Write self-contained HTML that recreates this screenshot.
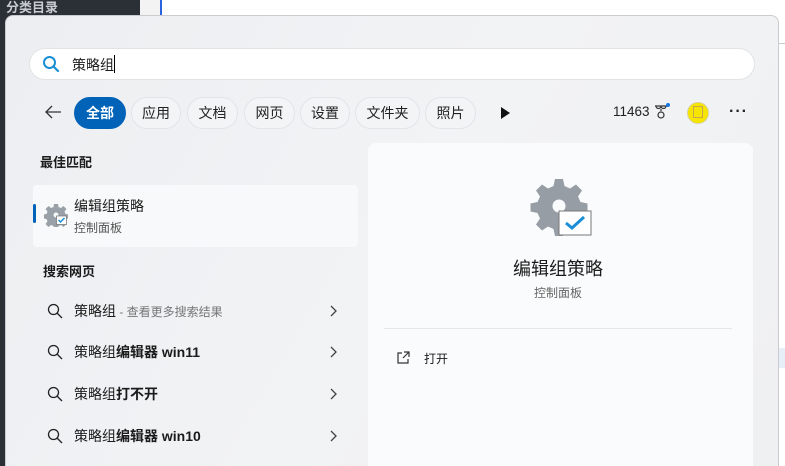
<!DOCTYPE html>
<html style="width:785px;height:466px;overflow:hidden"><head><meta charset="utf-8"><style>
*{margin:0;padding:0;box-sizing:border-box}
body{width:785px;height:466px;overflow:hidden;background:#fff;position:relative;font-family:"Liberation Sans","Noto Sans CJK SC",sans-serif;color:#1b1b1b}
.abs{position:absolute}
.pill{position:absolute;top:97px;height:32px;border-radius:16px;border:1px solid #e2e4e7;background:#f3f4f6;font-size:14px;line-height:30px;text-align:center;color:#222}
.row{position:absolute;left:33px;width:325px;height:40px}
.row .t{position:absolute;left:41px;top:10px;font-size:14px}
.row svg.m{position:absolute;left:14px;top:12px}
.row .ch{position:absolute;left:297px;top:13px}
</style></head><body>
<div class="abs" style="left:0;top:0;width:140px;height:48px;background:#2b2f36"></div>
<div class="abs" style="left:6px;top:-3px;color:#c8ccd2;font-size:13px;font-weight:bold">分类目录</div>
<div class="abs" style="left:0;top:0;width:5px;height:466px;background:#2b2f36"></div>
<div class="abs" style="left:160px;top:0;width:2px;height:15px;background:#2a62e0"></div>
<div class="abs" style="left:140px;top:0;width:20px;height:15px;background:#f3f3f3"></div>
<div class="abs" style="left:778px;top:43px;width:7px;height:1px;background:#ccc"></div>
<div class="abs" style="left:778px;top:348px;width:7px;height:20px;background:#e8eef8"></div>

<div class="abs" style="left:5px;top:15px;width:774px;height:460px;border:1px solid #c9cbce;border-radius:8px;background:linear-gradient(120deg,#eceef1,#f2f3f5 50%,#eff0f2)"></div>

<div class="abs" style="left:29px;top:48px;width:726px;height:32px;border-radius:16px;background:#fff;border:1px solid #e2e3e5"></div>
<svg class="abs" style="left:42px;top:55px" width="18" height="18" viewBox="0 0 18 18"><circle cx="7.5" cy="7.5" r="5.5" fill="none" stroke="#1a8fd6" stroke-width="2"/><path d="M11.5 11.5L16 16" stroke="#1a8fd6" stroke-width="2.2" stroke-linecap="round"/></svg>
<div class="abs" style="left:72px;top:55px;font-size:14px">策略组</div>
<div class="abs" style="left:114px;top:55px;width:1px;height:18px;background:#000"></div>

<svg class="abs" style="left:44px;top:104px" width="18" height="16" viewBox="0 0 18 16"><path d="M17 8H2M8 2L2 8l6 6" fill="none" stroke="#333" stroke-width="1.3"/></svg>
<div class="pill" style="left:74px;width:52px;background:#0063b8;border-color:#0063b8;color:#fff;font-weight:bold">全部</div>
<div class="pill" style="left:131px;width:50px">应用</div>
<div class="pill" style="left:187px;width:51px">文档</div>
<div class="pill" style="left:244px;width:51px">网页</div>
<div class="pill" style="left:300px;width:50px">设置</div>
<div class="pill" style="left:355px;width:65px">文件夹</div>
<div class="pill" style="left:425px;width:51px">照片</div>
<svg class="abs" style="left:500px;top:107px" width="10" height="12"><path d="M1 0L10 6L1 12Z" fill="#111"/></svg>
<div class="abs" style="left:613px;top:104px;font-size:13.5px;color:#222">11463</div>
<svg class="abs" style="left:654px;top:101px" width="16" height="20" viewBox="0 0 16 20"><path d="M1 5h12M2 5a2.5 2.5 0 0 0 5 0M7 5a2.5 2.5 0 0 0 5 0M7 8v2" fill="none" stroke="#333" stroke-width="1.2"/><circle cx="7" cy="14" r="3" fill="none" stroke="#333" stroke-width="1.2"/><circle cx="14" cy="4" r="2" fill="#1677e0"/></svg>
<div class="abs" style="left:687px;top:102px;width:22px;height:22px;border-radius:50%;background:#f5e500;border:1px solid #d8d0a0"></div>
<div class="abs" style="left:693px;top:106px;width:10px;height:12px;border:1px solid #c9a64a"></div>
<div class="abs" style="left:729px;top:103px;font-size:16px;color:#222;letter-spacing:1px;font-weight:bold">···</div>

<div class="abs" style="left:40px;top:152px;font-size:13px;font-weight:bold">最佳匹配</div>
<div class="abs" style="left:33px;top:185px;width:325px;height:62px;background:#f8f9fa;border-radius:4px"></div>
<div class="abs" style="left:33px;top:204px;width:3px;height:19px;background:#0063b8;border-radius:2px"></div>
<svg class="abs" style="left:44px;top:203px" width="24" height="24" viewBox="0 0 48 48"><path d="M20 2h8l1 6 5 2 5-4 6 6-4 5 2 5 6 1v8l-6 1-2 5 4 5-6 6-5-4-5 2-1 6h-8l-1-6-5-2-5 4-6-6 4-5-2-5-6-1v-8l6-1 2-5-4-5 6-6 5 4 5-2z" fill="#9aa0a7"/><circle cx="24" cy="24" r="5" fill="#f8f9fa"/><rect x="25" y="26" width="20" height="17" fill="#fff" stroke="#777" stroke-width="1.5"/><path d="M29 34l4 4 8-8" fill="none" stroke="#1a8fd6" stroke-width="3"/></svg>
<div class="abs" style="left:74px;top:196px;font-size:14px">编辑组策略</div>
<div class="abs" style="left:74px;top:219px;font-size:12px;color:#555">控制面板</div>

<div class="abs" style="left:43px;top:261px;font-size:13px;font-weight:bold">搜索网页</div>

<div class="row" style="top:291px"><svg class="m" width="16" height="16" viewBox="0 0 16 16"><circle cx="6.5" cy="6.5" r="5" fill="none" stroke="#222" stroke-width="1.3"/><path d="M10 10l5 5" stroke="#222" stroke-width="1.3"/></svg><div class="t">策略组<span style="color:#777;font-size:12px"> - 查看更多搜索结果</span></div><svg class="ch" width="8" height="14"><path d="M1 2l5 5-5 5" fill="none" stroke="#444" stroke-width="1.3"/></svg></div>
<div class="row" style="top:332px"><svg class="m" width="16" height="16" viewBox="0 0 16 16"><circle cx="6.5" cy="6.5" r="5" fill="none" stroke="#222" stroke-width="1.3"/><path d="M10 10l5 5" stroke="#222" stroke-width="1.3"/></svg><div class="t">策略组<b>编辑器 win11</b></div><svg class="ch" width="8" height="14"><path d="M1 2l5 5-5 5" fill="none" stroke="#444" stroke-width="1.3"/></svg></div>
<div class="row" style="top:374px"><svg class="m" width="16" height="16" viewBox="0 0 16 16"><circle cx="6.5" cy="6.5" r="5" fill="none" stroke="#222" stroke-width="1.3"/><path d="M10 10l5 5" stroke="#222" stroke-width="1.3"/></svg><div class="t">策略组<b>打不开</b></div><svg class="ch" width="8" height="14"><path d="M1 2l5 5-5 5" fill="none" stroke="#444" stroke-width="1.3"/></svg></div>
<div class="row" style="top:416px"><svg class="m" width="16" height="16" viewBox="0 0 16 16"><circle cx="6.5" cy="6.5" r="5" fill="none" stroke="#222" stroke-width="1.3"/><path d="M10 10l5 5" stroke="#222" stroke-width="1.3"/></svg><div class="t">策略组<b>编辑器 win10</b></div><svg class="ch" width="8" height="14"><path d="M1 2l5 5-5 5" fill="none" stroke="#444" stroke-width="1.3"/></svg></div>

<div class="abs" style="left:368px;top:143px;width:385px;height:330px;background:#fafbfc;border-radius:8px"></div>
<svg class="abs" style="left:528px;top:178px" width="64" height="60" viewBox="0 0 64 60"><path d="M27 1h8l1.5 7 5.5 2.5 6-4 6 6-4 6 2.5 5.5 7 1.5v8l-7 1.5-2.5 5.5 4 6-6 6-6-4-5.5 2.5-1.5 7h-8l-1.5-7-5.5-2.5-6 4-6-6 4-6-2.5-5.5-7-1.5v-8l7-1.5 2.5-5.5-4-6 6-6 6 4 5.5-2.5z" fill="#979da4"/><circle cx="31" cy="28" r="6.5" fill="#fafbfc"/><rect x="31" y="33" width="32" height="24" fill="#fff" stroke="#777" stroke-width="1"/><path d="M38 45l6 5 12-11" fill="none" stroke="#1a8fd6" stroke-width="3"/></svg>
<div class="abs" style="left:468px;top:255px;width:180px;text-align:center;font-size:18px">编辑组策略</div>
<div class="abs" style="left:468px;top:284px;width:180px;text-align:center;font-size:12px;color:#666">控制面板</div>
<div class="abs" style="left:384px;top:328px;width:348px;height:1px;background:#e6e7e9"></div>
<svg class="abs" style="left:396px;top:351px" width="14" height="14" viewBox="0 0 14 14"><path d="M6 2H2v10h10V8M8 1h5v5M13 1L7 7" fill="none" stroke="#333" stroke-width="1.2"/></svg>
<div class="abs" style="left:424px;top:350px;font-size:12px">打开</div>
</body></html>
